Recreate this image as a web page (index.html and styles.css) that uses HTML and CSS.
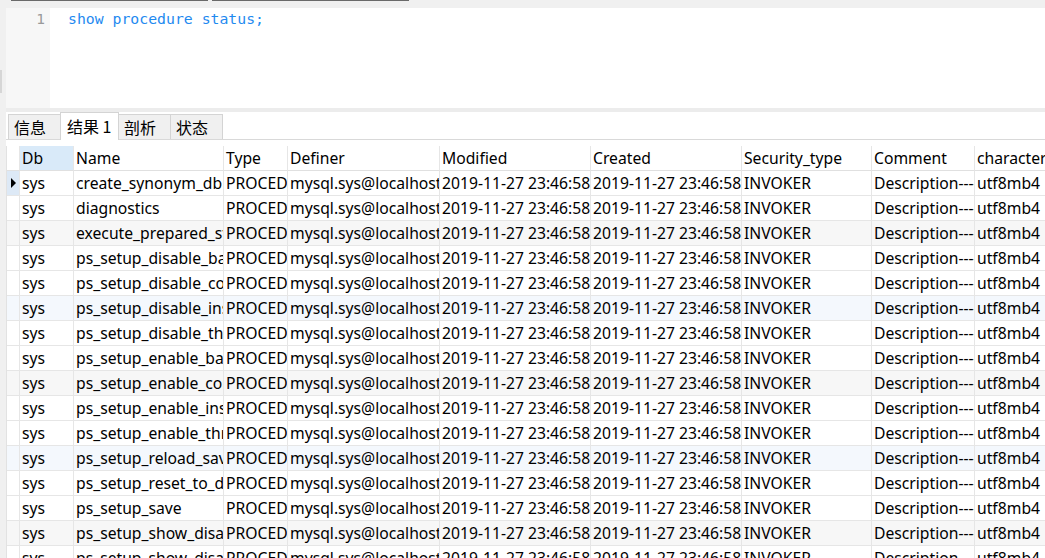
FILE: index.html
```html
<!DOCTYPE html>
<html lang="zh">
<head>
<meta charset="utf-8">
<title>show procedure status</title>
<link rel="stylesheet" href="styles.css">
</head>
<body>
<div class="topbar"><span class="tbar tbar-a"></span><span class="tbar tbar-b"></span></div>
<div class="workspace">
  <div class="leftstrip"><span class="handle"></span></div>
  <div class="main">
    <div class="editor">
      <div class="gutter">1</div>
      <div class="code">show procedure status;</div>
    </div>
    <div class="sep"></div>
    <div class="tabs">
      <div class="tab">信息</div>
      <div class="tab active">结果 1</div>
      <div class="tab">剖析</div>
      <div class="tab">状态</div>
    </div>
    <div class="grid" id="grid">
      <div class="row head">
        <div class="c ind"></div>
        <div class="c w-db sel">Db</div>
        <div class="c w-name">Name</div>
        <div class="c w-type">Type</div>
        <div class="c w-def">Definer</div>
        <div class="c w-mod">Modified</div>
        <div class="c w-cre">Created</div>
        <div class="c w-sec">Security_type</div>
        <div class="c w-com">Comment</div>
        <div class="c w-chr">character_set_client</div>
      </div>
    </div>
  </div>
</div>
<script src="app.js"></script>
</body>
</html>
```
FILE: app.js
```js
var names = [
  "create_synonym_db", "diagnostics", "execute_prepared_stmt",
  "ps_setup_disable_background_threads", "ps_setup_disable_consumer",
  "ps_setup_disable_instrument", "ps_setup_disable_thread",
  "ps_setup_enable_background_threads", "ps_setup_enable_consumer",
  "ps_setup_enable_instrument", "ps_setup_enable_thread",
  "ps_setup_reload_saved", "ps_setup_reset_to_default", "ps_setup_save",
  "ps_setup_show_disabled", "ps_setup_show_disabled_consumers"
];
var grid = document.getElementById("grid");
names.forEach(function (n, i) {
  var r = document.createElement("div");
  var cls = "row";
  if (i % 6 === 2) cls += " gray";
  if (i % 6 === 5) cls += " blue";
  r.className = cls;
  var cells = [
    ["ind" + (i === 0 ? " cur" : ""), i === 0 ? '<span class="arrow"></span>' : ""],
    ["w-db", "sys"], ["w-name", n], ["w-type", "PROCEDURE"],
    ["w-def", "mysql.sys@localhost"], ["w-mod", "2019-11-27 23:46:58"],
    ["w-cre", "2019-11-27 23:46:58"], ["w-sec", "INVOKER"],
    ["w-com", "Description-----------"], ["w-chr", "utf8mb4"]
  ];
  r.innerHTML = cells.map(function (c) {
    return '<div class="c ' + c[0] + '">' + c[1] + '</div>';
  }).join("");
  grid.appendChild(r);
});
```
FILE: styles.css
```css
html, body {
  margin: 0;
  padding: 0;
  width: 1045px;
  height: 558px;
  overflow: hidden;
  background: #ffffff;
  font-family: "Noto Sans", "Noto Sans CJK SC", sans-serif;
  font-size: 15.7px;
  color: #000;
}
.topbar {
  height: 8px;
  background: #f0f0f0;
  display: flex;
  gap: 4px;
  padding-left: 11px;
}
.tbar {
  display: block;
  height: 1px;
  background: #6a6a6a;
}
.tbar-a { width: 197px; }
.tbar-b { width: 197px; }
.workspace {
  display: flex;
  height: 550px;
}
.leftstrip {
  width: 6px;
  flex: none;
  background: #f0f0f0;
}
.handle {
  display: block;
  width: 2px;
  height: 23px;
  margin-top: 62px;
  background: #d6d6d6;
}
.main {
  flex: 1;
  min-width: 0;
  display: flex;
  flex-direction: column;
}
.editor {
  height: 100px;
  display: flex;
  flex: none;
}
.gutter {
  width: 44px;
  flex: none;
  background: #f7f7f7;
  color: #9a9a9a;
  font-family: "DejaVu Sans Mono", monospace;
  font-size: 14.5px;
  text-align: right;
  box-sizing: border-box;
  padding-right: 5px;
  padding-top: 1px;
  line-height: 20px;
}
.code {
  flex: 1;
  padding-left: 18px;
  padding-top: 1px;
  line-height: 20px;
  font-family: "DejaVu Sans Mono", monospace;
  font-size: 14.8px;
  color: #1f8af0;
  white-space: pre;
}
.sep {
  height: 4px;
  flex: none;
  background: #ececec;
}
.tabs {
  height: 27px;
  flex: none;
  display: flex;
  align-items: flex-end;
  padding-left: 2px;
  border-bottom: 1px solid #d9d9d9;
}
.tab {
  box-sizing: border-box;
  width: 53px;
  height: 25px;
  background: #f0f0f0;
  border: 1px solid #d4d4d4;
  border-bottom: none;
  padding-left: 5px;
  font-family: "Noto Sans CJK SC", sans-serif;
  font-size: 16px;
  line-height: 25px;
}
.tab.active {
  width: 59px;
  height: 28px;
  background: #ffffff;
  margin-bottom: -1px;
  line-height: 27px;
  padding-left: 6px;
}
.tab + .tab { margin-left: -1px; }
.grid {
  margin-top: 6px;
  border-left: 1px solid #e2e2e2;
}
.row {
  display: flex;
  height: 25px;
  white-space: nowrap;
}
.row.gray { background: #f7f7f7; }
.row.blue { background: #f4f8fd; }
.c {
  flex: none;
  box-sizing: border-box;
  height: 25px;
  border-right: 1px solid #e6e6e6;
  border-bottom: 1px solid #e6e6e6;
  padding-left: 2px;
  line-height: 24px;
  overflow: hidden;
  white-space: nowrap;
}
.head .c { border-bottom-color: #e0e0e0; }
.ind { width: 13px; position: relative; padding: 0; }
.ind.cur { background: #dde9f6; }
.sel { background: #d9eaf9; }
.w-db { width: 54px; }
.w-name { width: 150px; }
.w-type { width: 64px; }
.w-def { width: 152px; }
.w-mod { width: 151px; }
.w-cre { width: 151px; }
.w-sec { width: 130px; }
.w-com { width: 103px; }
.w-chr { width: 100px; }
.arrow {
  position: absolute;
  left: 4px;
  top: 7px;
  width: 0;
  height: 0;
  border-top: 5px solid transparent;
  border-bottom: 5px solid transparent;
  border-left: 5px solid #000;
}
```
